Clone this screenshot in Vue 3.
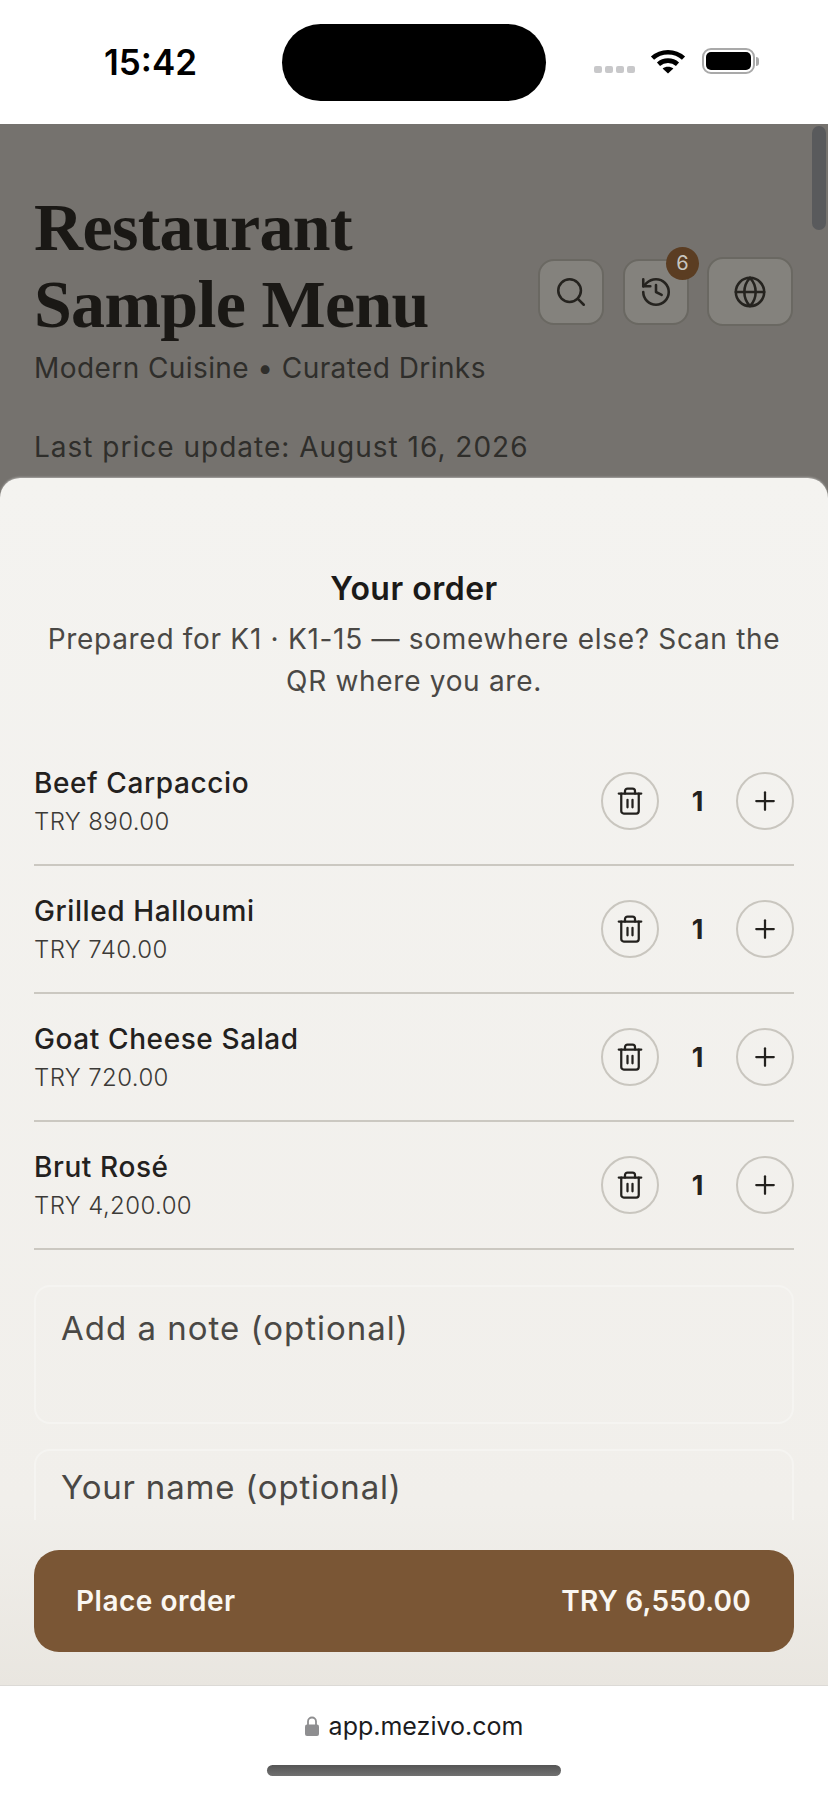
<script setup>
const items = [
  { name: 'Beef Carpaccio', price: 'TRY 890.00' },
  { name: 'Grilled Halloumi', price: 'TRY 740.00' },
  { name: 'Goat Cheese Salad', price: 'TRY 720.00' },
  { name: 'Brut Rosé', price: 'TRY 4,200.00' },
]
</script>

<template>
  <div class="phone">
    <header class="status">
      <span class="time">15:42</span>
      <div class="island"></div>
      <div class="indicators">
        <div class="dots"><i></i><i></i><i></i><i></i></div>
        <svg class="wifi" viewBox="0 0 36 26" fill="none" stroke="#000" stroke-width="4.6">
          <path d="M2.5 10.2C11 2.2 25 2.2 33.5 10.2" />
          <path d="M8.5 16.2C13.8 11.4 22.2 11.4 27.5 16.2" />
          <path d="M18 25.5 12.6 20.6C15.6 18 20.4 18 23.4 20.6Z" fill="#000" stroke="none" />
        </svg>
        <div class="battery"><span></span></div>
        <div class="tip"></div>
      </div>
    </header>

    <main class="page">
      <div class="hero">
        <div class="hero-row">
          <h1>Restaurant<br />Sample Menu</h1>
          <div class="tools">
            <button class="tool">
              <svg viewBox="0 0 24 24"><circle cx="11" cy="11" r="8" /><path d="m21 21-4.3-4.3" /></svg>
            </button>
            <button class="tool">
              <svg viewBox="0 0 24 24"><path d="M3 12a9 9 0 1 0 9-9 9.75 9.75 0 0 0-6.74 2.74L3 8" /><path d="M3 3v5h5" /><path d="M12 7v5l4 2" /></svg>
              <span class="badge">6</span>
            </button>
            <button class="tool wide">
              <svg viewBox="0 0 24 24"><circle cx="12" cy="12" r="10" /><path d="M12 2a14.5 14.5 0 0 0 0 20 14.5 14.5 0 0 0 0-20" /><path d="M2 12h20" /></svg>
            </button>
          </div>
        </div>
        <p class="tagline">Modern Cuisine • Curated Drinks</p>
        <p class="updated">Last price update: August 16, 2026</p>
      </div>

      <div class="scroll-thumb"></div>

      <section class="sheet">
        <div class="sheet-body">
          <h2>Your order</h2>
          <p class="prepared">Prepared for K1 · K1-15 — somewhere else? Scan the QR where you are.</p>

          <ul class="items">
            <li v-for="item in items" :key="item.name" class="item">
              <div class="info">
                <div class="name">{{ item.name }}</div>
                <div class="price">{{ item.price }}</div>
              </div>
              <div class="stepper">
                <button class="round">
                  <svg viewBox="0 0 24 24"><path d="M3 6h18" /><path d="M19 6v14a2 2 0 0 1-2 2H7a2 2 0 0 1-2-2V6" /><path d="M8 6V4a2 2 0 0 1 2-2h4a2 2 0 0 1 2 2v2" /><path d="M10 11v6" /><path d="M14 11v6" /></svg>
                </button>
                <span class="qty">1</span>
                <button class="round">
                  <svg viewBox="0 0 24 24"><path d="M5 12h14" /><path d="M12 5v14" /></svg>
                </button>
              </div>
            </li>
          </ul>

          <div class="field note">Add a note (optional)</div>
          <div class="field guest">Your name (optional)</div>
        </div>

        <div class="sheet-foot">
          <button class="place">
            <span>Place order</span>
            <span class="total">TRY 6,550.00</span>
          </button>
        </div>
      </section>
    </main>

    <footer class="browser">
      <div class="url">
        <svg class="lock" viewBox="0 0 14 20">
          <path d="M3 9V5.5a4 4 0 0 1 8 0V9" fill="none" stroke="#8e8e90" stroke-width="1.8" />
          <rect x="0" y="8.5" width="14" height="11.5" rx="2" fill="#8e8e90" />
        </svg>
        <span>app.mezivo.com</span>
      </div>
      <div class="home"></div>
    </footer>
  </div>
</template>

<style>
html, body { margin: 0; background: #fff; }
</style>

<style scoped>
.phone {
  width: 828px;
  height: 1795px;
  display: flex;
  flex-direction: column;
  overflow: hidden;
  font-family: Inter, "Liberation Sans", sans-serif;
  color: #1c1b19;
}
button { font: inherit; color: inherit; padding: 0; cursor: pointer; }
svg { display: block; }

.status {
  height: 124px;
  flex: none;
  position: relative;
  background: #fff;
}
.time {
  position: absolute;
  left: 104px;
  top: 43px;
  font-size: 35px;
  line-height: 38px;
  font-weight: 600;
  color: #000;
}
.island {
  position: absolute;
  left: 282px;
  top: 24px;
  width: 264px;
  height: 77px;
  border-radius: 39px;
  background: #000;
}
.indicators {
  position: absolute;
  left: 594px;
  top: 48px;
  width: 170px;
  height: 26px;
  display: flex;
  align-items: center;
}
.dots { display: flex; gap: 3px; margin-top: 17px; width: 56px; }
.dots i { width: 8px; height: 7px; border-radius: 2px; background: #c8c8ca; }
.wifi { width: 36px; height: 26px; flex: none; }
.battery {
  margin-left: 16px;
  width: 53px;
  height: 26px;
  box-sizing: border-box;
  border: 2px solid #a9a9a9;
  border-radius: 9px;
  padding: 2px;
  flex: none;
}
.battery span { display: block; height: 100%; background: #000; border-radius: 5px; }
.tip { width: 3px; height: 9px; background: #a9a9a9; border-radius: 0 3px 3px 0; margin-left: 1px; }

.page {
  flex: 1;
  position: relative;
  background: #75726e;
  overflow: hidden;
}
.hero { padding: 65px 34px 0; }
.hero-row { display: flex; justify-content: space-between; align-items: flex-end; }
h1 {
  margin: 0;
  font-family: "Liberation Serif", serif;
  font-weight: 700;
  font-size: 68px;
  line-height: 77px;
  letter-spacing: -0.7px;
  color: #1a1815;
}
.tools { display: flex; gap: 19px; align-items: center; margin: 0 1px 17px 0; }
.tool {
  position: relative;
  width: 66px;
  height: 66px;
  box-sizing: border-box;
  border-radius: 16px;
  border: 2px solid #6a6862;
  background: #84827d;
  display: flex;
  align-items: center;
  justify-content: center;
}
.tool.wide { width: 86px; height: 69px; margin-left: -1px; }
.tool svg {
  width: 34px;
  height: 34px;
  fill: none;
  stroke: #25231f;
  stroke-width: 1.8;
  stroke-linecap: round;
  stroke-linejoin: round;
}
.badge {
  position: absolute;
  top: -14px;
  right: -12px;
  width: 33px;
  height: 33px;
  border-radius: 50%;
  background: #5b3d22;
  color: #c8c5bf;
  font-size: 20px;
  line-height: 33px;
  text-align: center;
}
.tagline {
  margin: 7px 0 0;
  font-size: 28px;
  line-height: 36px;
  letter-spacing: 0.42px;
  color: #2f2e2b;
}
.updated {
  margin: 43px 0 0;
  font-size: 28px;
  line-height: 36px;
  letter-spacing: 1px;
  color: #2f2e2b;
}
.scroll-thumb {
  position: absolute;
  right: 2px;
  top: 2px;
  width: 14px;
  height: 104px;
  border-radius: 7px;
  background: #595a5c;
}

.sheet {
  position: absolute;
  left: 0;
  right: 0;
  bottom: 0;
  height: 1207px;
  display: flex;
  flex-direction: column;
  border-radius: 20px 20px 0 0;
  background: linear-gradient(#f4f3f0, #f1efeb 85%, #e9e6e0);
  box-shadow: 0 -1px 2px rgba(255, 255, 255, 0.35);
}
.sheet-body {
  height: 1042px;
  flex: none;
  overflow: hidden;
  padding: 90px 34px 0;
  box-sizing: border-box;
}
h2 {
  margin: 0;
  text-align: center;
  font-size: 32px;
  line-height: 42px;
  letter-spacing: 0.5px;
  font-weight: 600;
  color: #1b1a18;
}
.prepared {
  margin: 8px 0 0;
  text-align: center;
  font-size: 28px;
  line-height: 42px;
  letter-spacing: 0.7px;
  color: #4a4845;
}
.items { list-style: none; margin: 36px 0 0; padding: 0; }
.item {
  height: 128px;
  box-sizing: border-box;
  border-bottom: 2px solid #cbc8c1;
  display: flex;
  justify-content: space-between;
  align-items: center;
}
.name { font-size: 28px; line-height: 38px; letter-spacing: 0.6px; font-weight: 500; color: #23211e; }
.price { font-size: 24px; line-height: 34px; letter-spacing: 0.4px; font-weight: 300; color: #3c3a37; margin-top: 3px; }
.stepper { display: flex; align-items: center; }
.round {
  width: 58px;
  height: 58px;
  box-sizing: border-box;
  border-radius: 50%;
  border: 2px solid #c9c6bf;
  background: transparent;
  display: flex;
  align-items: center;
  justify-content: center;
}
.round svg {
  width: 30px;
  height: 30px;
  fill: none;
  stroke: #23211e;
  stroke-width: 1.8;
  stroke-linecap: round;
  stroke-linejoin: round;
}
.qty {
  width: 77px;
  text-align: center;
  font-size: 27px;
  font-weight: 700;
  color: #23211e;
}
.field {
  box-sizing: border-box;
  border: 2px solid #f5f4f1;
  border-radius: 16px;
  padding: 21px 25px 0;
  font-size: 33px;
  line-height: 40px;
  letter-spacing: 1px;
  color: #4a4845;
}
.note { height: 139px; margin-top: 35px; }
.guest { height: 88px; margin-top: 25px; padding-top: 16px; border-radius: 16px 16px 0 0; letter-spacing: 0.8px; }
.sheet-foot { padding: 30px 34px 33px; }
.place {
  width: 100%;
  height: 102px;
  border: none;
  border-radius: 25px;
  background: #7a5635;
  color: #faf7f2;
  padding: 0 43px 0 42px;
  display: flex;
  align-items: center;
  justify-content: space-between;
  font-size: 28px;
  letter-spacing: 0.5px;
  font-weight: 600;
}
.total { letter-spacing: 0.25px; }

.browser {
  height: 110px;
  flex: none;
  display: flex;
  flex-direction: column;
  align-items: center;
  background: #fff;
  border-top: 1px solid #dcdad6;
  box-sizing: border-box;
}
.url {
  margin-top: 25px;
  display: flex;
  align-items: center;
  gap: 10px;
  font-size: 25px;
  line-height: 30px;
  color: #1c1c1e;
}
.lock { width: 14px; height: 20px; }
.home {
  margin-top: 24px;
  width: 294px;
  height: 11px;
  border-radius: 6px;
  background: linear-gradient(#555, #707070);
}
</style>
